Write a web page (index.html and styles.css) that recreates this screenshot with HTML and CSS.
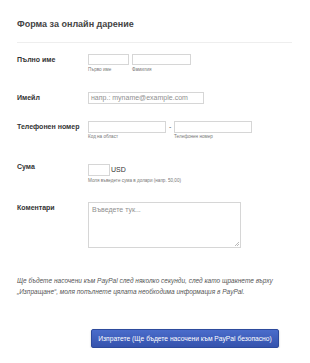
FILE: index.html
```html
<!DOCTYPE html>
<html lang="bg">
<head>
<meta charset="utf-8">
<title>Форма за онлайн дарение</title>
<link rel="stylesheet" href="styles.css">
</head>
<body>
<div class="form">
  <div class="header">
    <h1 class="title">Форма за онлайн дарение</h1>
  </div>

  <div class="row row-name">
    <div class="label">Пълно име</div>
    <div class="fields">
      <div class="sub">
        <div class="input w-first"></div>
        <div class="sublabel">Първо име</div>
      </div>
      <div class="sub">
        <div class="input w-last"></div>
        <div class="sublabel">Фамилия</div>
      </div>
    </div>
  </div>

  <div class="row row-email">
    <div class="label">Имейл</div>
    <div class="fields">
      <div class="input input-tall w-email"><span class="ph">напр.: myname@example.com</span></div>
    </div>
  </div>

  <div class="row row-phone">
    <div class="label">Телефонен номер</div>
    <div class="fields">
      <div class="sub">
        <div class="input input-tall w-phone"></div>
        <div class="sublabel">Код на област</div>
      </div>
      <div class="dash">-</div>
      <div class="sub">
        <div class="input input-tall w-phone"></div>
        <div class="sublabel">Телефонен номер</div>
      </div>
    </div>
  </div>

  <div class="row row-sum">
    <div class="label label-up">Сума</div>
    <div class="fields fields-col">
      <div class="sum-line">
        <div class="input input-tall w-sum"></div>
        <span class="currency">USD</span>
      </div>
      <div class="sublabel help">Моля въведете сума в долари (напр. 50,00)</div>
    </div>
  </div>

  <div class="row row-comment">
    <div class="label">Коментари</div>
    <div class="fields">
      <div class="textarea"><span class="ph">Въведете тук...</span><span class="grip"></span></div>
    </div>
  </div>

  <p class="note">Ще бъдете насочени към PayPal след няколко секунди, след като щракнете върху<br>„Изпращане“, моля попълнете цялата необходима информация в PayPal.</p>

  <div class="actions">
    <button class="submit" type="button">Изпратете (Ще бъдете насочени към PayPal безопасно)</button>
  </div>
</div>
</body>
</html>
```

FILE: styles.css
```css
html, body {
  margin: 0;
  padding: 0;
  background: #ffffff;
}

body {
  font-family: "Liberation Sans", Arial, sans-serif;
  color: #333333;
}

.form {
  width: 275px;
  margin-left: 17px;
}

.header {
  padding-top: 18px;
  padding-bottom: 12px;
  border-bottom: 1px solid #eeeeee;
}

.title {
  margin: 0;
  font-size: 9px;
  line-height: 12px;
  font-weight: bold;
  color: #444444;
}

.row {
  display: flex;
  align-items: flex-start;
}

.row-name { margin-top: 11px; }
.row-email { margin-top: 19px; }
.row-phone { margin-top: 17px; }
.row-sum { margin-top: 24px; }
.row-comment { margin-top: 18px; }

.label {
  width: 71px;
  flex: none;
  font-size: 7px;
  line-height: 11px;
  font-weight: bold;
  color: #333333;
}

.label-up {
  margin-top: -3px;
}

.fields {
  display: flex;
  align-items: flex-start;
  gap: 3px;
}

.fields-col {
  flex-direction: column;
  gap: 0;
}

.sub {
  display: flex;
  flex-direction: column;
}

.input {
  box-sizing: border-box;
  height: 11px;
  border: 1px solid #d6d6d6;
  background: #ffffff;
  display: flex;
  align-items: center;
  padding-left: 2px;
}

.input-tall {
  height: 12px;
}

.w-first { width: 41px; }
.w-last { width: 59px; }
.w-email { width: 116px; }
.w-phone { width: 78px; }
.w-sum { width: 22px; }

.ph {
  font-size: 7px;
  line-height: 8px;
  color: #8f8f8f;
  white-space: nowrap;
}

.sublabel {
  margin-top: 2px;
  font-size: 4.6px;
  line-height: 6px;
  color: #777777;
  white-space: nowrap;
}

.row-phone .sublabel {
  margin-top: 1px;
}

.dash {
  width: 2px;
  font-size: 7px;
  line-height: 12px;
  color: #555555;
  text-align: center;
}

.sum-line {
  display: flex;
  align-items: center;
}

.currency {
  margin-left: 1px;
  font-size: 7px;
  line-height: 12px;
  color: #333333;
}

.help {
  margin-top: 2px;
}

.textarea {
  box-sizing: border-box;
  position: relative;
  width: 153px;
  height: 46px;
  border: 1px solid #d6d6d6;
  padding: 2px 3px;
}

.textarea .ph {
  display: block;
  line-height: 9px;
}

.grip {
  position: absolute;
  right: 1px;
  bottom: 1px;
  width: 4px;
  height: 4px;
  background: linear-gradient(135deg, transparent 50%, #bbbbbb 50%, #bbbbbb 60%, transparent 60%, transparent 75%, #bbbbbb 75%, #bbbbbb 85%, transparent 85%);
}

.note {
  margin: 27px 0 0 0;
  font-size: 6.5px;
  line-height: 11px;
  font-style: italic;
  color: #555555;
  white-space: nowrap;
}

.actions {
  margin-top: 30px;
  padding-left: 74px;
}

.submit {
  box-sizing: border-box;
  width: 188px;
  height: 19px;
  padding: 0;
  border: 1px solid #2d4a9c;
  border-radius: 2px;
  background: linear-gradient(#4a6ccb, #3553ad);
  box-shadow: 0 1px 2px rgba(0, 0, 0, 0.25);
  color: #ffffff;
  font-family: "Liberation Sans", Arial, sans-serif;
  font-size: 6.7px;
  line-height: 17px;
  white-space: nowrap;
}
```
